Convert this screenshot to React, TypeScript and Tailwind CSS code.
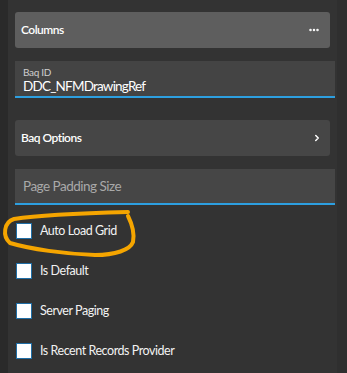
import { MoreHorizontal, ChevronRight } from 'lucide-react';

const font = { fontFamily: '"Lato", "Open Sans", sans-serif' };

function Checkbox({ label }: { label: string }) {
  return (
    <label className="flex items-center gap-[8px] h-[16px] pl-[1px]">
      <span className="w-[16px] h-[16px] bg-white border border-[#1f6ea6] shrink-0" />
      <span className="text-[12.5px] tracking-[-0.45px] text-[#f2f2f2]">{label}</span>
    </label>
  );
}

export default function App() {
  return (
    <div className="flex w-[347px] h-[373px] bg-[#333333] overflow-hidden" style={font}>
      <div className="w-[8px] bg-[#2a2a2a] shrink-0" />
      <div className="relative flex-1 pl-[7px] pt-[12px]">
        {/* Columns */}
        <div className="w-[315px] h-[36px] rounded-[3px] bg-[#5e5e5e] flex items-center justify-between pl-[6px] pr-[10px]">
          <span className="text-[12px] tracking-[-0.5px] font-semibold text-white">Columns</span>
          <MoreHorizontal className="w-[12px] h-[12px] text-white" strokeWidth={3} />
        </div>

        {/* Baq ID */}
        <div className="mt-[13px] w-[320px] h-[37px] bg-[#444444] border-b-2 border-[#2d9fe0] pl-[8px] pt-[5px] flex flex-col">
          <span className="text-[10px] leading-[12px] tracking-[-0.3px] text-[#cfcfcf]">Baq ID</span>
          <span className="text-[13.5px] leading-[17px] tracking-[-0.8px] text-white">DDC_NFMDrawingRef</span>
        </div>

        {/* Baq Options */}
        <div className="mt-[22px] w-[315px] h-[36px] rounded-[3px] bg-[#464646] flex items-center justify-between pl-[6px] pr-[8px]">
          <span className="text-[12px] tracking-[-0.5px] font-semibold text-white">Baq Options</span>
          <ChevronRight className="w-[10px] h-[10px] text-white" strokeWidth={3.5} />
        </div>

        {/* Page Padding Size */}
        <div className="mt-[13px] w-[320px] h-[36px] bg-[#464646] border-b-2 border-[#2d9fe0] pl-[8px] flex items-center">
          <span className="text-[13.5px] tracking-[-0.5px] text-[#a9a9a9]">Page Padding Size</span>
        </div>

        <div className="mt-[18px] flex flex-col gap-[24px]">
          <Checkbox label="Auto Load Grid" />
          <Checkbox label="Is Default" />
          <Checkbox label="Server Paging" />
          <Checkbox label="Is Recent Records Provider" />
        </div>

        {/* annotation circle */}
        <svg className="absolute left-[-8px] top-0 pointer-events-none" width="347" height="373" viewBox="0 0 347 373">
          <path
            d="M 128 212 C 90 213, 40 215, 14 219 C 4 222, 2 236, 10 243 C 30 249, 65 254, 95 255 C 115 255, 130 250, 133 242 C 135 232, 131 222, 128 216"
            fill="none"
            stroke="#f5a500"
            strokeWidth="4"
            strokeLinecap="round"
          />
        </svg>
      </div>
      <div className="w-[10px] bg-[#2f2f2f] shrink-0" />
    </div>
  );
}
